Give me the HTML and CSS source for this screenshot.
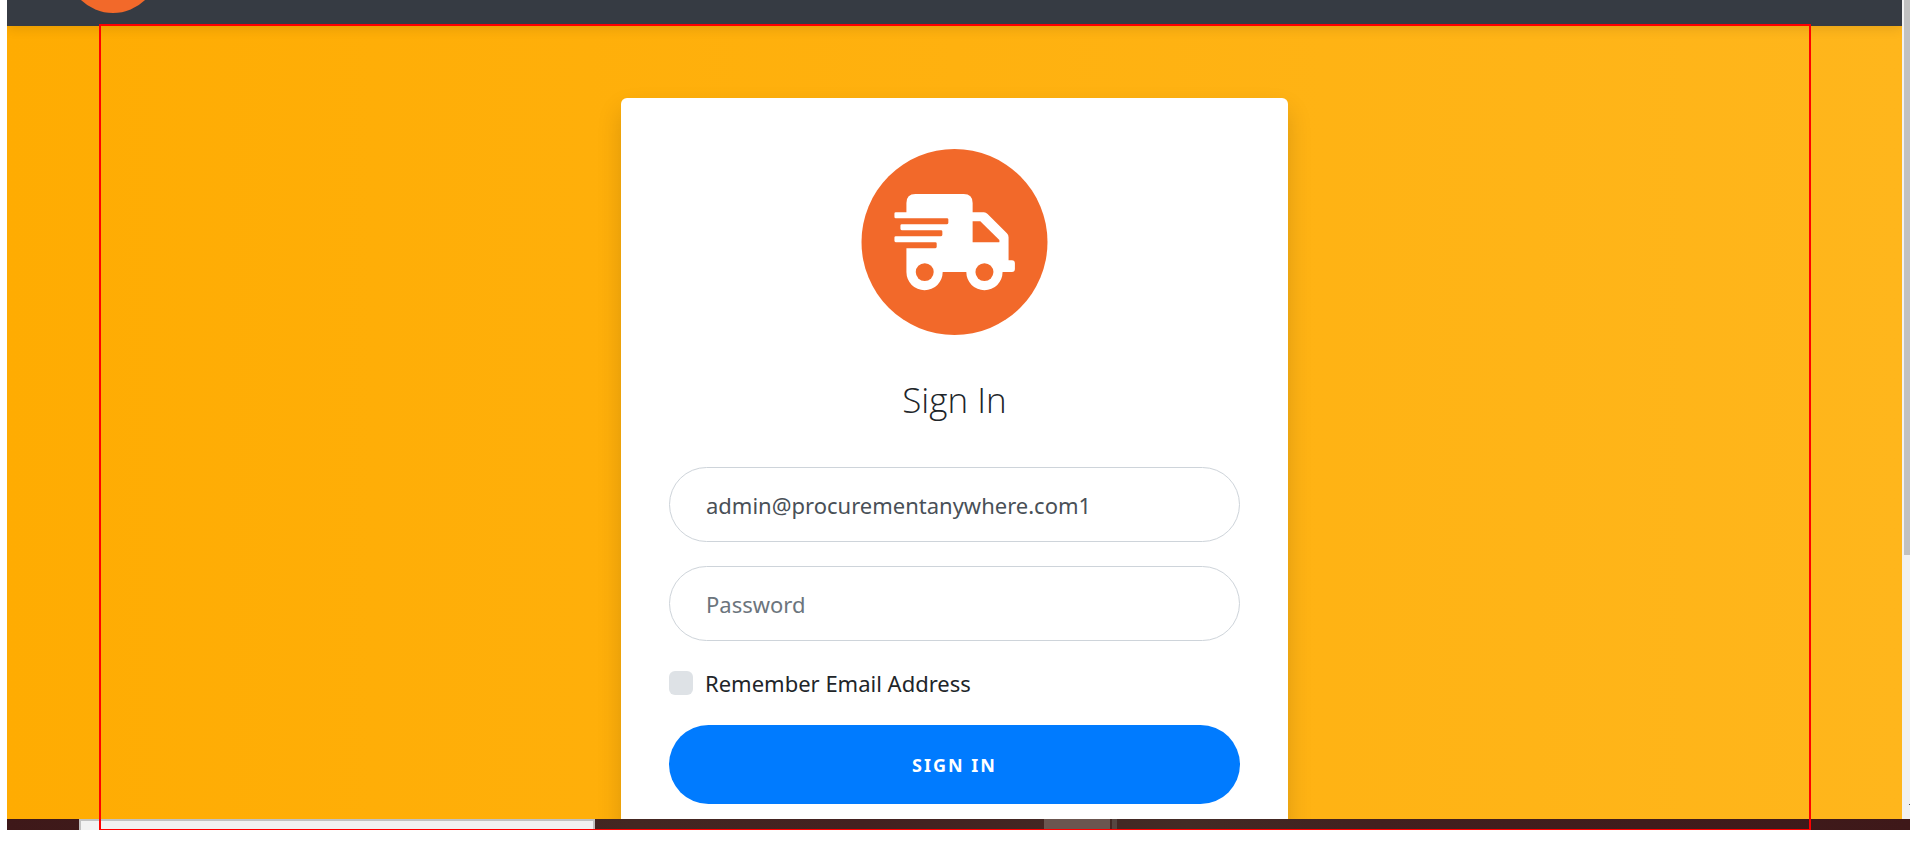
FILE: index.html
```html
<!DOCTYPE html>
<html lang="en">
<head>
<meta charset="utf-8">
<title>Sign In</title>
<link rel="stylesheet" href="styles.css">
</head>
<body>
<div class="screen">
  <div class="viewport">
    <div class="page">
      <header class="navbar">
        <svg class="brand" viewBox="0 0 92 92" aria-hidden="true"><circle cx="46" cy="46" r="46" fill="#f2692a"/></svg>
      </header>
      <main class="content">
        <section class="card">
          <svg class="logo" viewBox="64 56 559 559" role="img" aria-label="Delivery truck">
            <circle cx="343.5" cy="335.5" r="279.5" fill="#f2692a"/>
            <path fill="#fff" d="M199 246V218Q199 191 226 191H371Q398 191 398 218V246H432Q438 246 443 251L501 309Q506 314 506 321V390H516Q525 390 525 399V417Q525 426 516 426H488A54.500 54.500 0 0 1 379 426H308A54.500 54.500 0 0 1 199 426V354H286Q290 354 290 350V340Q290 336 286 336H167Q163 336 163 332V322Q163 318 167 318H303Q307 318 307 314V304Q307 300 303 300H185Q181 300 181 296V286Q181 282 185 282H321Q325 282 325 278V268Q325 264 321 264H167Q163 264 163 260V250Q163 246 167 246Z"/>
            <path fill="#f2692a" d="M398 273H421L476 327Q481 332 478 336H398Z"/>
            <circle cx="254" cy="426" r="27" fill="#f2692a"/>
            <circle cx="433.500" cy="426" r="27" fill="#f2692a"/>
          </svg>
          <h1 class="title">Sign In</h1>
          <form class="form">
            <input class="field" type="email" aria-label="Email address" value="admin@procurementanywhere.com1">
            <input class="field" type="password" aria-label="Password" placeholder="Password">
            <div class="remember">
              <input class="check" type="checkbox" id="remember">
              <label for="remember">Remember Email Address</label>
            </div>
            <button class="submit" type="button">Sign in</button>
          </form>
        </section>
      </main>
    </div>
    <div class="scrollbar">
      <div class="thumb"></div>
      <div class="arrow"></div>
    </div>
  </div>
  <div class="taskbar">
    <div class="search"></div>
    <div class="task"></div>
    <div class="task-edge"></div>
  </div>
  <div class="selection"></div>
</div>
</body>
</html>
```
FILE: styles.css
```css
* {
  box-sizing: border-box;
}

body {
  margin: 0;
  background: #fff;
  color: #212529;
  font-family: "Segoe UI", "Noto Sans", "Open Sans", sans-serif;
  font-size: 22px;
}

.screen {
  position: relative;
  display: flex;
  flex-direction: column;
  height: calc(100vh - 25px);
  margin-left: 7px;
  overflow: hidden;
}

.viewport {
  display: flex;
  flex: 1;
  min-height: 0;
}

.page {
  display: flex;
  flex: 1;
  flex-direction: column;
  overflow: hidden;
  background: linear-gradient(to right, #ffac02, #ffb61c);
}

.navbar {
  display: flex;
  flex: none;
  align-items: flex-end;
  height: 26px;
  padding: 0 60px 13px;
  overflow: hidden;
  background: #363b43;
  box-shadow: 0 3px 12px rgba(0, 0, 0, 0.1);
}

.brand {
  flex: none;
  width: 92px;
  height: 92px;
}

.content {
  display: flex;
  justify-content: center;
  align-items: flex-start;
  padding-top: 72px;
}

.card {
  display: flex;
  flex-direction: column;
  align-items: center;
  width: 100%;
  max-width: 667px;
  padding: 51px 48px 48px;
  border-radius: 6px;
  background: #fff;
  box-shadow: 0 12px 24px rgba(0, 0, 0, 0.15);
}

.logo {
  width: 187px;
  height: 186px;
}

.title {
  margin: 44px 0 46px;
  font-family: "Segoe UI", "Open Sans", sans-serif;
  font-size: 35px;
  font-weight: 300;
  line-height: 42px;
}

.form {
  display: flex;
  flex-direction: column;
  width: 100%;
}

.field {
  width: 100%;
  height: 75px;
  margin: 0 0 24px;
  padding: 0 36px;
  border: 1px solid #ced4da;
  border-radius: 48px;
  outline: 0;
  background: #fff;
  color: #495057;
  font: inherit;
}

.field::placeholder {
  color: #6c757d;
  opacity: 1;
}

.remember {
  display: flex;
  align-items: center;
  gap: 12px;
  margin-bottom: 24px;
  line-height: 36px;
}

.check {
  width: 24px;
  height: 24px;
  margin: 0;
  border-radius: 6px;
  appearance: none;
  background: #dee2e6;
}

.check:checked {
  background: #007bff;
}

.submit {
  height: 79px;
  border: 0;
  border-radius: 48px;
  background: #007bff;
  color: #fff;
  font: inherit;
  font-size: 18px;
  font-weight: 700;
  letter-spacing: 2px;
  text-transform: uppercase;
}

.scrollbar {
  display: flex;
  flex-direction: column;
  justify-content: space-between;
  align-items: flex-end;
  width: 8px;
  padding-bottom: 14px;
  background: #f1f1f1;
}

.thumb {
  width: 6px;
  height: 69%;
  background: #c1c1c1;
}

.arrow {
  width: 1px;
  height: 1px;
  background: #505050;
}

.taskbar {
  display: flex;
  flex: none;
  height: 11px;
  background: linear-gradient(to right, #3e1819, #442722 33%, #432120 45%, #432b25 62%, #42201f 72%, #3e1819);
}

.search {
  width: 516px;
  margin-left: 72px;
  border: 2px solid #c1c1c1;
  border-bottom: 0;
  background: #f2f2f2;
}

.task {
  width: 66px;
  margin-left: 449px;
  background: #6b5650;
}

.task-edge {
  width: 5px;
  margin-left: 2px;
  background: #574641;
}

.selection {
  position: absolute;
  inset: 24px 99px 0 92px;
  border: 2px solid #f00;
  border-bottom-width: 1px;
  pointer-events: none;
}
```
